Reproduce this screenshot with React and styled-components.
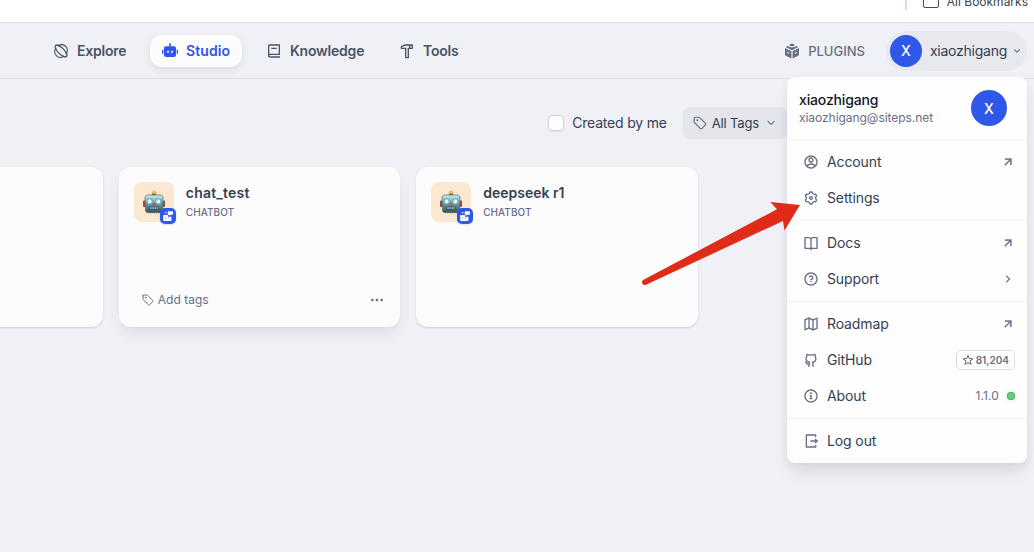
import React from 'react';
import styled, { createGlobalStyle, css } from 'styled-components';
import {
  RiAccountCircleLine, RiSettings3Line, RiBookOpenLine, RiQuestionLine, RiMap2Line,
  RiGithubLine, RiInformation2Line, RiLogoutBoxRLine, RiStarLine, RiArrowRightUpLine,
  RiArrowRightSLine, RiArrowDownSLine, RiRobot2Fill, RiBook2Line, RiHammerLine,
  RiMoreFill,
} from 'react-icons/ri';

const GlobalStyle = createGlobalStyle`
  * { box-sizing: border-box; }
  body {
    margin: 0;
    background: #f0f1f6;
    color: #354052;
    font-family: Inter, "Liberation Sans", sans-serif;
    font-size: 14px;
    overflow: hidden;
  }
  svg { display: block; flex-shrink: 0; }
`;

const Page = styled.div`
  position: relative;
  height: 552px;
  overflow: hidden;
`;

const BookmarkBar = styled.div`
  display: flex;
  justify-content: flex-end;
  height: 23px;
  padding-right: 6px;
  background: #fff;
  border-bottom: 1px solid #dcdee0;
  overflow: hidden;
`;

const BarDivider = styled.span`
  width: 2px;
  height: 10px;
  margin-right: 16px;
  background: #d0dcf9;
`;

const FolderIcon = styled.span`
  width: 16px;
  height: 13px;
  margin: -5px 8px 0 0;
  border: 1.5px solid #484b50;
  border-radius: 2px;
`;

const BarText = styled.span`
  margin-top: -6px;
  color: #3c3f44;
  font-size: 12px;
  line-height: 16px;
`;

const Header = styled.header`
  display: flex;
  align-items: center;
  justify-content: space-between;
  height: 56px;
  padding: 0 7px 0 41px;
  border-bottom: 1px solid #dfe0e5;
`;

const Nav = styled.nav`
  display: flex;
  gap: 12px;
`;

const NavItem = styled.a`
  display: flex;
  align-items: center;
  gap: 8px;
  width: ${({ $width }) => $width}px;
  height: 32px;
  padding: 0 0 0 12px;
  border-radius: 12px;
  color: #495464;
  font-weight: 600;
  letter-spacing: -0.22px;
  white-space: nowrap;
  ${({ $active }) => $active && css`
    background: #fcfcfd;
    color: #2f55eb;
    letter-spacing: 0.1px;
    box-shadow: 0 3px 8px rgba(16, 24, 40, 0.09);
  `}
`;

const HeaderActions = styled.div`
  display: flex;
  align-items: center;
  gap: 21px;
`;

const Plugins = styled.a`
  display: flex;
  align-items: center;
  gap: 8px;
  color: #676f83;
  font-size: 13px;
  font-weight: 500;
`;

const AccountButton = styled.button`
  display: flex;
  align-items: center;
  height: 40px;
  padding: 0 4px;
  border: 0;
  border-radius: 20px;
  background: #e8e9ee;
  color: #354052;
  font: inherit;
  line-height: 20px;
  letter-spacing: -0.25px;
`;

const AccountName = styled.span`
  margin: 0 4px 0 8px;
`;

const Avatar = styled.span`
  display: flex;
  align-items: center;
  justify-content: center;
  flex-shrink: 0;
  width: ${({ $size }) => $size}px;
  height: ${({ $size }) => $size}px;
  border-radius: 50%;
  background: #2f57e8;
  color: #fff;
  font-size: 14px;
  font-weight: 500;
  letter-spacing: 0;
`;

const Filters = styled.div`
  display: flex;
  align-items: center;
  justify-content: flex-end;
  height: 32px;
  margin-top: 28px;
  padding-right: 246px;
`;

const Checkbox = styled.span`
  width: 16px;
  height: 16px;
  margin-right: 8px;
  border: 1px solid #cdd2da;
  border-radius: 4px;
  background: #fdfdfe;
  box-shadow: 0 1px 2px rgba(16, 24, 40, 0.05);
`;

const FilterLabel = styled.span`
  padding-bottom: 1px;
  letter-spacing: -0.2px;
`;

const TagFilter = styled.div`
  display: flex;
  align-items: center;
  height: 32px;
  margin-left: 16px;
  padding: 0 10px;
  border-radius: 8px;
  background: #e4e6ec;
  color: #354052;
  font-size: 13px;
  letter-spacing: -0.15px;
  & > span { margin: 0 5px; }
  & svg { color: #676f83; }
`;

const CardGrid = styled.main`
  display: grid;
  grid-template-columns: repeat(3, 1fr);
  gap: 16px;
  width: 876px;
  margin: 28px 0 0 -178.5px;
`;

const Card = styled.article`
  display: flex;
  flex-direction: column;
  justify-content: space-between;
  height: 160px;
  padding: 15px;
  border-radius: 12px;
  background: #fcfcfd;
  box-shadow: ${({ $raised }) => ($raised
    ? '0 8px 16px -2px rgba(16,24,40,.08), 0 3px 5px -2px rgba(16,24,40,.04)'
    : '0 1px 2px rgba(16,24,40,.16)')};
`;

const CardHead = styled.div`
  display: flex;
  gap: 12px;
`;

const AppIcon = styled.div`
  position: relative;
  display: flex;
  align-items: center;
  justify-content: center;
  width: 40px;
  height: 40px;
  border-radius: 8px;
  background: #fae8d1;
`;

const AppBadge = styled.span`
  position: absolute;
  right: -2px;
  bottom: -2px;
  display: flex;
  align-items: center;
  justify-content: center;
  width: 16px;
  height: 16px;
  border-radius: 5px;
  background: #2f57e8;
  box-shadow: 0 1px 2px rgba(16, 24, 40, 0.12);
`;

const CardTitle = styled.div`
  margin-top: 1px;
  color: #354052;
  font-weight: 600;
  line-height: 20px;
  letter-spacing: ${({ $tracking }) => $tracking || 0}px;
`;

const CardType = styled.div`
  color: #676f83;
  font-size: 10px;
  font-weight: 500;
  line-height: 18px;
  letter-spacing: 0.05px;
`;

const CardFoot = styled.div`
  display: flex;
  align-items: center;
  justify-content: space-between;
  height: 24px;
  padding: 0 0 0 8px;
  color: #676f83;
`;

const AddTags = styled.span`
  display: flex;
  align-items: center;
  gap: 4px;
  font-size: 12px;
  & > span { padding-bottom: 1px; }
`;

const Menu = styled.aside`
  position: absolute;
  top: 77px;
  left: 787px;
  width: 240px;
  border-radius: 8px;
  background: #fefefe;
  box-shadow: 0 12px 18px -4px rgba(16, 24, 40, 0.1), 0 3px 10px rgba(16, 24, 40, 0.05);
`;

const Profile = styled.div`
  display: flex;
  align-items: center;
  justify-content: space-between;
  height: 62px;
  padding: 0 20px 0 12px;
`;

const ProfileName = styled.div`
  color: #101828;
  font-weight: 500;
  line-height: 20px;
  letter-spacing: -0.15px;
`;

const ProfileMail = styled.div`
  color: #676f83;
  font-size: 12px;
  line-height: 16px;
  letter-spacing: -0.05px;
`;

const MenuGroup = styled.div`
  padding: 4px 0;
  border-top: 1px solid #f0f1f4;
`;

const MenuRow = styled.div`
  display: flex;
  align-items: center;
  gap: 8px;
  height: 36px;
  padding: 0 12px 0 16px;
  color: #354052;
  & svg { color: #676f83; }
`;

const MenuLabel = styled.span`
  flex: 1;
  padding-bottom: 2px;
  letter-spacing: -0.12px;
`;

const StarCount = styled.span`
  display: flex;
  align-items: center;
  gap: 2px;
  height: 20px;
  padding: 0 5px;
  border: 1px solid #dcdee3;
  border-radius: 5px;
  color: #676f83;
  font-size: 10px;
  font-weight: 600;
`;

const Version = styled.span`
  padding-bottom: 2px;
  color: #676f83;
  font-size: 12px;
  letter-spacing: 0.1px;
`;

const StatusDot = styled.span`
  width: 8px;
  height: 8px;
  border: 1px solid #53b26a;
  border-radius: 3px;
  background: #6cc780;
  box-shadow: 0 0 4px rgba(23, 178, 106, 0.25);
`;

const Pointer = styled.svg`
  position: absolute;
  left: 636px;
  top: 196px;
  pointer-events: none;
`;

const ExploreIcon = () => (
  <svg width="16" height="16" viewBox="0 0 16 16" fill="none" stroke="currentColor" strokeWidth="1.25" strokeLinecap="round">
    <path d="M5.3 2.9A5.6 5.6 0 0 1 13.2 10.7M10.7 13.2A5.6 5.6 0 0 1 2.9 5.3" />
    <ellipse cx="8" cy="8" rx="7.7" ry="3" transform="rotate(45 8 8)" />
  </svg>
);

const OpenLinkIcon = styled(RiArrowRightUpLine).attrs({ size: 14 })`
  stroke: currentColor;
  stroke-width: 0.6px;
`;

const TagIcon = ({ size }) => (
  <svg width={size} height={size} viewBox="0 0 14 14" fill="none" stroke="currentColor" strokeWidth="1.15" strokeLinejoin="round" strokeLinecap="round">
    <path d="M1.2 2.2v3.5c0 .4.1.7.4 1l5.5 5.6c.6.6 1.4.6 2 0l3.1-3.1c.6-.6.6-1.4 0-2L6.7 1.6c-.3-.3-.6-.4-1-.4H2.2c-.6 0-1 .4-1 1Z" />
    <circle cx="4.3" cy="4.3" r=".45" fill="currentColor" />
  </svg>
);

const PluginIcon = () => (
  <svg width="16" height="16" viewBox="0 0 16 16" fill="currentColor">
    <path d="M1 5.1 7.4 8.3v7.1L2 12.7a1.4 1.4 0 0 1-1-1.3ZM15 5.1 8.6 8.3v7.1l5.4-2.7a1.4 1.4 0 0 0 1-1.3Z" />
    <path d="m1.7 4 2.1-1 1 .5c1.5 1.2 4.9 1.2 6.4 0l1-.5 2.1 1L8 7.2Z" />
    <ellipse cx="8" cy="2" rx="2.5" ry="1.2" />
    <path d="m3.2 8.7 2 1v1.4l-2-1ZM12.8 8.7l-2 1v1.4l2-1Z" fill="#f0f1f6" />
  </svg>
);

const RobotFace = () => (
  <svg width="24" height="24" viewBox="0 0 24 24">
    <defs>
      <linearGradient id="robot-shell" x1="0" y1="0" x2="0" y2="1">
        <stop offset="0" stopColor="#d4eeee" />
        <stop offset=".35" stopColor="#86adb2" />
        <stop offset="1" stopColor="#2f5059" />
      </linearGradient>
    </defs>
    <rect x="1" y="10.5" width="3" height="6.5" rx="1" fill="#a64143" />
    <rect x="20" y="10.5" width="3" height="6.5" rx="1" fill="#a64143" />
    <path d="M9.4 5.7 10.3 3h3.4l.9 2.7Z" fill="#625388" />
    <circle cx="12" cy="2.3" r="1.9" fill="#f3b62f" />
    <path d="M6 5h12c2 0 3 1.3 3 3l-.5 12c0 1.7-1 2.7-2.7 2.7H6.2c-1.7 0-2.7-1-2.7-2.7L3 8c0-1.7 1-3 3-3Z" fill="url(#robot-shell)" stroke="#4f7078" strokeWidth=".7" />
    <circle cx="7.6" cy="11.4" r="2.6" fill="#f1ffff" stroke="#4bb3c7" strokeWidth="1.1" />
    <circle cx="16.4" cy="11.4" r="2.6" fill="#f1ffff" stroke="#4bb3c7" strokeWidth="1.1" />
    <path d="m12 12 1.5 3h-3Z" fill="#cf4141" />
    <rect x="7.2" y="16.5" width="9.6" height="3" rx="1.2" fill="#344950" />
    <path d="M8.3 18h7.5" stroke="#d5e4e1" strokeWidth="1.3" strokeDasharray="1.3 .8" />
  </svg>
);

const ChatbotIcon = () => (
  <svg width="12" height="12" viewBox="0 0 12 12" fill="#fff">
    <path d="M6.4 1.2h3.8c.5 0 .8.3.8.8v1.9c0 .5-.3.8-.8.8H8.4L7 5.8V4.7h-.6c-.4 0-.7-.3-.7-.8V2c0-.5.3-.8.7-.8Z" />
    <path d="M1.8 5h4.3v1.8h3.3v3.4c0 .5-.3.8-.8.8H2c-.5 0-.8-.3-.8-.8V5.6c0-.4.2-.6.6-.6Z" />
    <circle cx="3.7" cy="2.7" r=".8" />
    <path d="M3.3 7.5h.8v.9h-.8ZM6.4 7.5h.8v.9h-.8Z" fill="#2f57e8" />
  </svg>
);

const AppCard = ({ name, raised, tracking }) => (
  <Card $raised={raised}>
    <CardHead>
      <AppIcon>
        <RobotFace />
        <AppBadge><ChatbotIcon /></AppBadge>
      </AppIcon>
      <div>
        <CardTitle $tracking={tracking}>{name}</CardTitle>
        <CardType>CHATBOT</CardType>
      </div>
    </CardHead>
    {raised && (
      <CardFoot>
        <AddTags><TagIcon size={12} /><span>Add tags</span></AddTags>
        <RiMoreFill size={16} />
      </CardFoot>
    )}
  </Card>
);

const Row = ({ icon: Icon, label, children }) => (
  <MenuRow>
    <Icon size={16} />
    <MenuLabel>{label}</MenuLabel>
    {children}
  </MenuRow>
);

export default function App() {
  return (
    <Page>
      <GlobalStyle />
      <BookmarkBar>
        <BarDivider />
        <FolderIcon />
        <BarText>All Bookmarks</BarText>
      </BookmarkBar>
      <Header>
        <Nav>
          <NavItem $width={97}><ExploreIcon />Explore</NavItem>
          <NavItem $width={92} $active><RiRobot2Fill size={16} />Studio</NavItem>
          <NavItem $width={121}><RiBook2Line size={16} />Knowledge</NavItem>
          <NavItem $width={84}><RiHammerLine size={16} />Tools</NavItem>
        </Nav>
        <HeaderActions>
          <Plugins><PluginIcon />PLUGINS</Plugins>
          <AccountButton>
            <Avatar $size={32}>X</Avatar>
            <AccountName>xiaozhigang</AccountName>
            <RiArrowDownSLine size={12} color="#676f83" />
          </AccountButton>
        </HeaderActions>
      </Header>
      <Filters>
        <Checkbox />
        <FilterLabel>Created by me</FilterLabel>
        <TagFilter>
          <TagIcon size={14} />
          <span>All Tags</span>
          <RiArrowDownSLine size={14} />
        </TagFilter>
      </Filters>
      <CardGrid>
        <Card />
        <AppCard name="chat_test" raised tracking={0.2} />
        <AppCard name="deepseek r1" />
      </CardGrid>
      <Menu>
        <Profile>
          <div>
            <ProfileName>xiaozhigang</ProfileName>
            <ProfileMail>xiaozhigang@siteps.net</ProfileMail>
          </div>
          <Avatar $size={36}>X</Avatar>
        </Profile>
        <MenuGroup>
          <Row icon={RiAccountCircleLine} label="Account"><OpenLinkIcon /></Row>
          <Row icon={RiSettings3Line} label="Settings" />
        </MenuGroup>
        <MenuGroup>
          <Row icon={RiBookOpenLine} label="Docs"><OpenLinkIcon /></Row>
          <Row icon={RiQuestionLine} label="Support"><RiArrowRightSLine size={14} /></Row>
        </MenuGroup>
        <MenuGroup>
          <Row icon={RiMap2Line} label="Roadmap"><OpenLinkIcon /></Row>
          <Row icon={RiGithubLine} label="GitHub">
            <StarCount><RiStarLine size={12} />81,204</StarCount>
          </Row>
          <Row icon={RiInformation2Line} label="About">
            <Version>1.1.0</Version>
            <StatusDot />
          </Row>
        </MenuGroup>
        <MenuGroup>
          <Row icon={RiLogoutBoxRLine} label="Log out" />
        </MenuGroup>
      </Menu>
      <Pointer width="170" height="94" viewBox="0 0 170 94">
        <path d="M7.5 83.8 141 13.2 134.3 6 164 9 148.5 34.4 147 25 10 88.7C6.5 90 4.5 85.6 7.5 83.8Z" fill="#df2b17" />
      </Pointer>
    </Page>
  );
}
